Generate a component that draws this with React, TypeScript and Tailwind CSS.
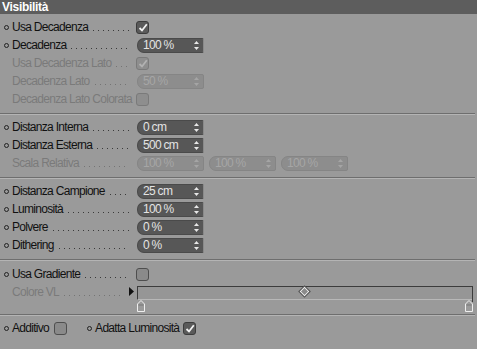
import React from "react";

type LabelProps = { text: string; bullet?: boolean; disabled?: boolean; dots?: boolean };

function Bullet() {
    return <div className="w-[5px] h-[5px] rounded-full border border-[#222]" />;
}

function Dots({ disabled = false, pr = "pr-[7px]" }: { disabled?: boolean; pr?: string }) {
    return (
        <div className={`flex-1 self-stretch flex items-end pb-[5px] pl-[5px] ${pr}`}>
            <div
                className={`w-full h-[1px] bg-repeat-x bg-[length:5px_1px] ${
                    disabled
                        ? "bg-[linear-gradient(to_right,#747474_1px,transparent_1px)]"
                        : "bg-[linear-gradient(to_right,#3a3a3a_1px,transparent_1px)]"
                }`}
            />
        </div>
    );
}

function Label({ text, bullet = true, disabled = false, dots = true }: LabelProps) {
    return (
        <div className="flex items-center w-[136px] h-full shrink-0 overflow-hidden">
            <div className="w-[12px] shrink-0 flex justify-center">{bullet && <Bullet />}</div>
            <span className={`whitespace-nowrap ${disabled ? "text-[#7a7a7a]" : "text-[#111]"}`}>{text}</span>
            {dots && <Dots disabled={disabled} />}
        </div>
    );
}

function Spinner({ color }: { color: string }) {
    return (
        <svg width="5" height="9" viewBox="0 0 5 9" className="shrink-0">
            <path d="M2.5 0 L5 3 L0 3 Z" fill={color} />
            <path d="M2.5 9 L5 6 L0 6 Z" fill={color} />
        </svg>
    );
}

function Field({ value, disabled = false }: { value: string; disabled?: boolean }) {
    return (
        <div
            className={`w-[67px] h-[15px] flex items-center justify-between pl-[5px] pr-[4px] rounded-l-[7px] rounded-r-[2px] border ${
                disabled
                    ? "bg-[#8d8d8d] border-[#858585] text-[#a6a6a6]"
                    : "bg-[#575757] border-[#4a4a4a] border-r-[#8a8a8a] text-[#e4e4e4]"
            }`}
        >
            <span className="leading-none">{value}</span>
            <Spinner color={disabled ? "#a5a5a5" : "#e8e8e8"} />
        </div>
    );
}

function Check({ checked = false, disabled = false }: { checked?: boolean; disabled?: boolean }) {
    const bg = disabled
        ? "bg-[#8e8e8e] border-[#7a7a7a]"
        : checked
          ? "bg-[#5a5a5a] border-[#3c3c3c]"
          : "bg-[#8a8a8a] border-[#4e4e4e]";
    return (
        <div className={`w-[13px] h-[13px] shrink-0 rounded-[3px] border flex items-center justify-center ${bg}`}>
            {checked && (
                <svg width="10" height="9" viewBox="0 0 10 9">
                    <path
                        d="M1.5 5 L4 7.5 L8.8 1.2"
                        fill="none"
                        stroke={disabled ? "#b2b2b2" : "#f2f2f2"}
                        strokeWidth="1.8"
                    />
                </svg>
            )}
        </div>
    );
}

function Row({ children }: { children: React.ReactNode }) {
    return <div className="h-[18px] flex items-center">{children}</div>;
}

function Separator() {
    return <div className="h-[2px] mr-[2px] border-t border-[#6e6e6e] border-b border-b-[#b4b4b4]" />;
}

function Knob() {
    return (
        <svg width="8" height="12" viewBox="0 0 8 12">
            <path d="M0.5 4 L4 0.5 L7.5 4 L7.5 11.5 L0.5 11.5 Z" fill="#9a9a9a" stroke="#eeeeee" strokeWidth="1" />
            <path d="M1.5 5 L6.5 5" stroke="#777" strokeWidth="1" />
        </svg>
    );
}

function NumRow({ label, value }: { label: string; value: string }) {
    return (
        <Row>
            <Label text={label} />
            <div className="ml-[1px]">
                <Field value={value} />
            </div>
        </Row>
    );
}

export default function App() {
    return (
        <div className="w-[477px] h-[349px] bg-[#9a9a9a] overflow-hidden text-[12px] tracking-[-0.7px] font-['Liberation_Sans',Arial,sans-serif]">
            <div className="h-[14px] bg-[#5d5d5d] pl-[2px] leading-[14px] font-bold text-white tracking-[-0.3px]">
                Visibilità
            </div>

            <div className="pt-[4px]">
                <Row>
                    <Label text="Usa Decadenza" />
                    <Check checked />
                </Row>
                <NumRow label="Decadenza" value="100 %" />
                <Row>
                    <Label text="Usa Decadenza Lato" bullet={false} disabled />
                    <Check checked disabled />
                </Row>
                <Row>
                    <Label text="Decadenza Lato" bullet={false} disabled />
                    <div className="ml-[1px]">
                        <Field value="50 %" disabled />
                    </div>
                </Row>
                <Row>
                    <Label text="Decadenza Lato Colorata" bullet={false} disabled dots={false} />
                    <Check disabled />
                </Row>
            </div>

            <div className="mt-[5px] mb-[3px]">
                <Separator />
            </div>

            <NumRow label="Distanza Interna" value="0 cm" />
            <NumRow label="Distanza Esterna" value="500 cm" />
            <Row>
                <Label text="Scala Relativa" bullet={false} disabled />
                <div className="ml-[1px] flex gap-[5px]">
                    <Field value="100 %" disabled />
                    <Field value="100 %" disabled />
                    <Field value="100 %" disabled />
                </div>
            </Row>

            <div className="mt-[5px] mb-[3px]">
                <Separator />
            </div>

            <NumRow label="Distanza Campione" value="25 cm" />
            <NumRow label="Luminosità" value="100 %" />
            <NumRow label="Polvere" value="0 %" />
            <NumRow label="Dithering" value="0 %" />

            <div className="mt-[5px] mb-[4px]">
                <Separator />
            </div>

            <Row>
                <Label text="Usa Gradiente" />
                <Check />
            </Row>
            <div className="flex items-start">
                <div className="h-[18px] flex items-center">
                    <div className="w-[128px] h-full flex items-center overflow-hidden">
                        <div className="w-[12px] shrink-0" />
                        <span className="whitespace-nowrap text-[#7a7a7a]">Colore VL</span>
                        <Dots disabled pr="pr-[4px]" />
                    </div>
                    <svg width="8" height="9" viewBox="0 0 8 9" className="mt-[-2px]">
                        <path d="M1 0 L6 4.5 L1 9 Z" fill="#111" />
                    </svg>
                </div>
                <div className="relative ml-[1px] mt-[3px] w-[336px] h-[27px]">
                    <div className="h-[14px] bg-[#969696] border-t border-[#3c3c3c] border-b border-b-[#b8b8b8] border-l border-l-[#3c3c3c]" />
                    <div className="absolute right-0 top-0 w-[1px] h-[16px] bg-[#3c3c3c]" />
                    <div className="absolute left-[164px] top-[2px] w-[7px] h-[7px] rotate-45 border border-[#f0f0f0] bg-[#8a8a8a] outline outline-1 outline-[#555]" />
                    <div className="absolute left-0 top-[14px]">
                        <Knob />
                    </div>
                    <div className="absolute right-0 top-[14px]">
                        <Knob />
                    </div>
                </div>
            </div>

            <div className="mt-[1px] mb-[3px]">
                <Separator />
            </div>

            <Row>
                <div className="w-[12px] shrink-0 flex justify-center">
                    <Bullet />
                </div>
                <span className="text-[#111] mr-[5px]">Additivo</span>
                <Check />
                <div className="ml-[20px] mr-[3px]">
                    <Bullet />
                </div>
                <span className="text-[#111] mr-[4px]">Adatta Luminosità</span>
                <Check checked />
            </Row>
        </div>
    );
}
